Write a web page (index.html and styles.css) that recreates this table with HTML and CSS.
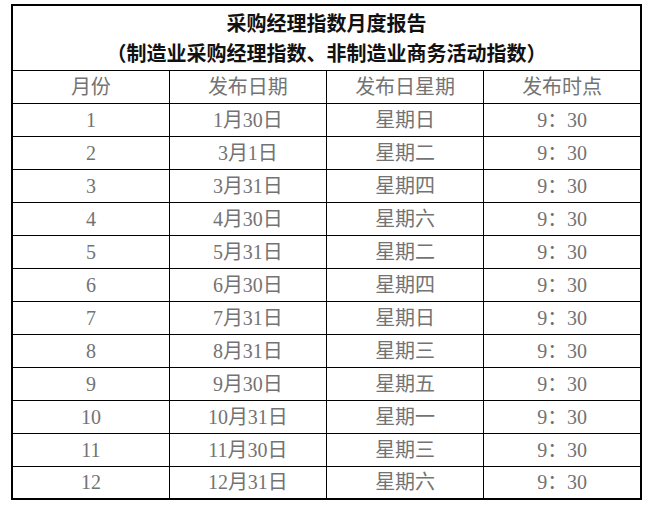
FILE: index.html
```html
<!DOCTYPE html>
<html lang="zh-CN">
<head>
<meta charset="utf-8">
<title>采购经理指数月度报告</title>
<link rel="stylesheet" href="styles.css">
</head>
<body>
<table class="report">
  <colgroup><col class="c"><col class="c"><col class="c"><col class="c"></colgroup>
  <tr class="title-row">
    <th colspan="4" class="title">采购经理指数月度报告<br>（制造业采购经理指数、非制造业商务活动指数）</th>
  </tr>
  <tr class="row head"><td>月份</td><td>发布日期</td><td>发布日星期</td><td>发布时点</td></tr>
  <tr class="row"><td>1</td><td>1月30日</td><td>星期日</td><td>9：30</td></tr>
  <tr class="row"><td>2</td><td>3月1日</td><td>星期二</td><td>9：30</td></tr>
  <tr class="row"><td>3</td><td>3月31日</td><td>星期四</td><td>9：30</td></tr>
  <tr class="row"><td>4</td><td>4月30日</td><td>星期六</td><td>9：30</td></tr>
  <tr class="row"><td>5</td><td>5月31日</td><td>星期二</td><td>9：30</td></tr>
  <tr class="row"><td>6</td><td>6月30日</td><td>星期四</td><td>9：30</td></tr>
  <tr class="row"><td>7</td><td>7月31日</td><td>星期日</td><td>9：30</td></tr>
  <tr class="row"><td>8</td><td>8月31日</td><td>星期三</td><td>9：30</td></tr>
  <tr class="row"><td>9</td><td>9月30日</td><td>星期五</td><td>9：30</td></tr>
  <tr class="row"><td>10</td><td>10月31日</td><td>星期一</td><td>9：30</td></tr>
  <tr class="row"><td>11</td><td>11月30日</td><td>星期三</td><td>9：30</td></tr>
  <tr class="row"><td>12</td><td>12月31日</td><td>星期六</td><td>9：30</td></tr>
</table>
</body>
</html>
```
FILE: styles.css
```css
html, body {
  margin: 0;
  padding: 0;
  background: #fff;
}
body {
  padding: 4px 0 0 11px;
  font-family: "Liberation Serif", "Noto Sans CJK SC", serif;
}
.report {
  border-collapse: collapse;
  width: 631px;
  table-layout: fixed;
  border: 2px solid #000;
}
.report td, .report th {
  border: 1.5px solid #000;
  padding: 0;
  text-align: center;
  vertical-align: middle;
}
.title-row {
  height: 65px;
}
.title {
  font-family: "Noto Sans CJK SC", serif;
  font-size: 20px;
  font-weight: bold;
  line-height: 30px;
  color: #111;
}
.row {
  height: 33px;
}
.row td {
  font-size: 20px;
  line-height: 22px;
  color: #737373;
  font-weight: normal;
}
```
